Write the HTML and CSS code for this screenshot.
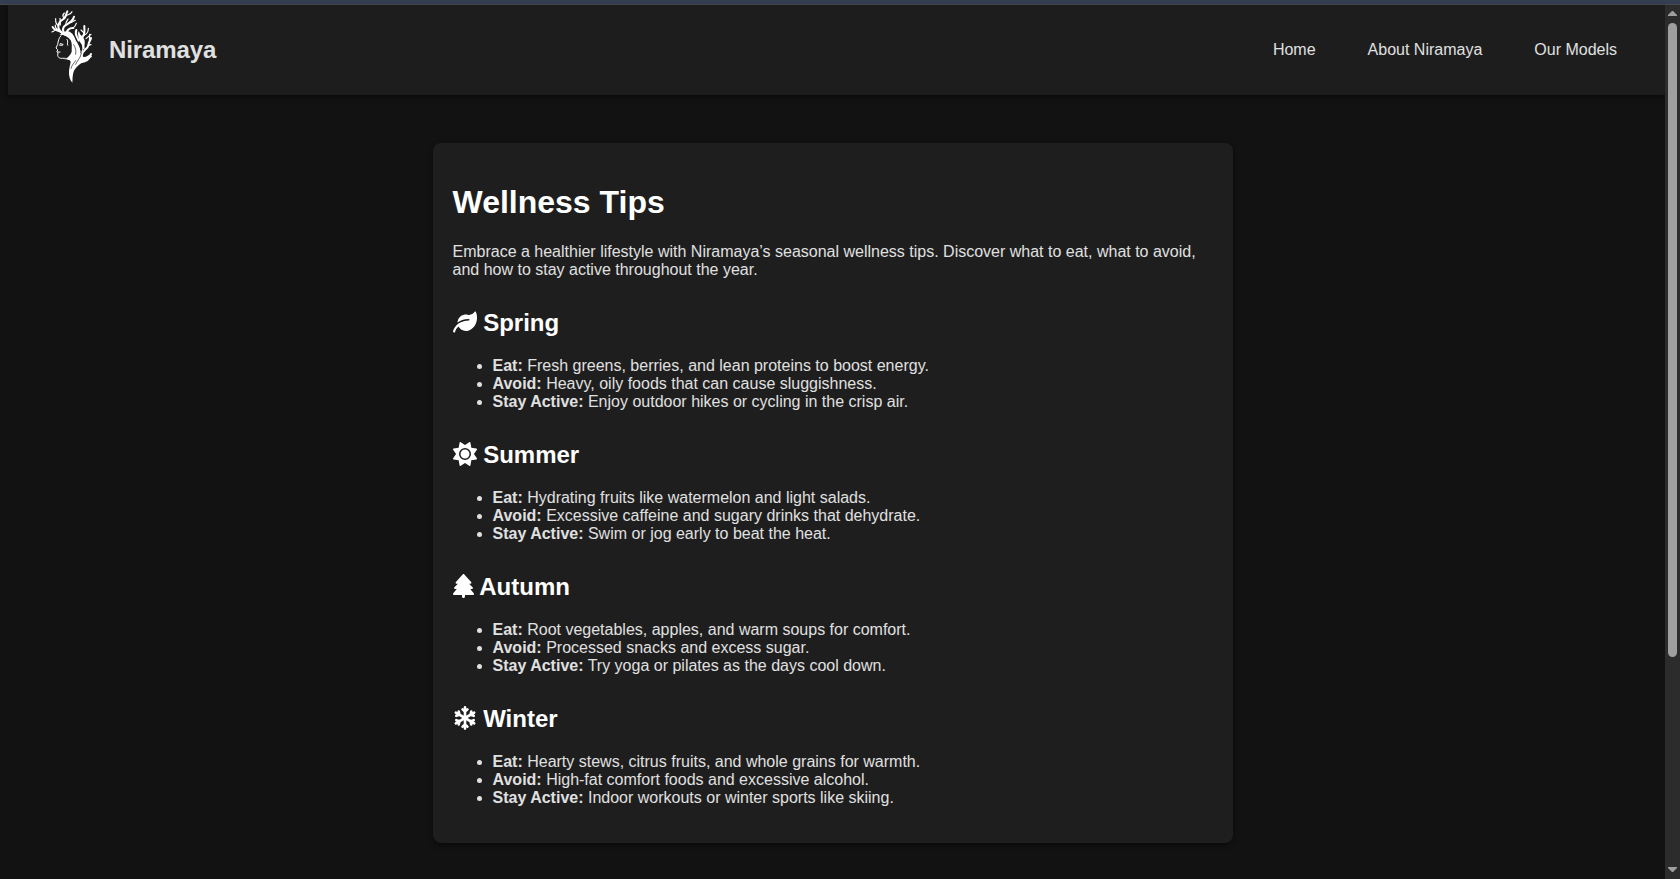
FILE: index.html
```html
<!DOCTYPE html>
<html lang="en">
<head>
<meta charset="utf-8">
<title>Niramaya - Wellness Tips</title>
<link rel="stylesheet" href="styles.css">
</head>
<body>
<div class="frame-edge"></div>
<div class="viewport">
  <div class="page">
    <header class="navbar">
      <div class="brand">
        <svg class="logo" viewBox="0 0 165 252" width="55" height="84" fill="none" stroke="#fff" stroke-linecap="round" stroke-linejoin="round">
          <path fill="#fff" stroke="none" d="M44 92C56 80 70 80 78 86C88 92 90 106 96 115C101 124 108 137 106 148C113 139 116 126 107 117C99 108 101 95 98 85C110 96 122 102 119 121C117 136 108 145 115 159C122 161 132 153 139 147C135 164 120 171 109 178C96 186 86 198 84 211C82 221 83 229 82 236C75 229 71 216 72 202C73 189 76 181 77 173C75 167 64 166 58 166C70 161 77 152 80 143C80 131 82 119 77 109C70 98 58 92 44 92Z"/>
          <g stroke-width="6">
            <path d="M60 91C49 85 40 80 40 69C40 58 43 52 54 46C63 42 62 32 67 22"/>
            <path d="M58 90C53 80 52 70 61 64C75 56 85 50 87 38"/>
            <path d="M48 84C39 78 27 80 23 69"/>
            <path d="M66 90C62 80 75 70 85 72"/>
            <path d="M101 110C95 94 88 91 94 78"/>
            <path d="M116 133C114 116 107 108 113 98C121 89 118 80 118 66"/>
            <path d="M111 153C113 136 128 136 130 124C131 112 137 111 138 102"/>
            <path d="M105 174C122 174 134 166 138 150"/>
            <path d="M103 142C101 127 89 120 86 105"/>
            <path d="M97 160C98 148 92 142 90 134"/>
          </g>
          <g stroke-width="3.500">
            <path d="M58 43C51 36 53 32 58 27M63 35C69 31 77 32 81 23M40 65C30 58 32 50 32 44M40 77C29 73 31 68 31 63M46 63L45 43M62 63C62 54 66 50 69 45M77 56L91 49M28 80L21 84M82 71C91 73 91 62 94 58"/>
            <path d="M117 94C129 88 130 82 130 73M108 107C102 96 104 91 101 84M123 104L138 91M129 124L138 122M133 114L134 91M116 86L108 78M129 160L139 158"/>
          </g>
          <g stroke-width="3">
            <path d="M48 95C40 103 40 112 38 121L33 132L38 137L36 143L39 147L38 154C41 166 49 162 61 163"/>
            <path d="M43 123L52 124M46 119L54 121M38 144L45 144M66 106C72 112 64 120 68 124"/>
          </g>
          <path stroke="#1d1d1d" stroke-width="2" d="M86 122C92 132 94 138 92 151M92 181C99 165 107 163 109 145M78 193C81 181 88 177 92 170"/>
        </svg>
        <span class="brand-name">Niramaya</span>
      </div>
      <nav class="nav-links">
        <a>Home</a>
        <a>About Niramaya</a>
        <a>Our Models</a>
      </nav>
    </header>
    <main class="card">
      <h1>Wellness Tips</h1>
      <p>Embrace a healthier lifestyle with Niramaya’s seasonal wellness tips. Discover what to eat, what to avoid, and how to stay active throughout the year.</p>

      <h2><svg class="icon" viewBox="0 0 512 512"><path d="M512 165.400c0 127.900-70.050 235.300-175.300 270.100c-20.040 7.938-41.830 12.460-64.690 12.460c-64.900 0-125.200-36.510-155.700-94.470c-54.130 49.930-68.710 107-68.960 108.100C44.720 472.600 34.870 480 24.020 480c-1.844 0-3.727-.2187-5.602-.6562c-12.890-3.098-20.840-16.080-17.750-28.960c9.598-39.500 90.470-226.400 335.300-226.400C344.800 224 352 216.800 352 208S344.800 192 336 192C228.600 192 151 226.600 96.290 267.600c.1934-10.820 1.242-21.840 3.535-33.050c13.470-65.810 66.040-119 131.400-134.200c28.330-6.562 55.680-6.013 80.930-.0054c56 13.320 118.200-7.412 149.300-61.240c5.664-9.828 20.020-9.516 24.660 .8282C502.700 76.760 512 121.900 512 165.400z"/></svg> Spring</h2>
      <ul>
        <li><strong>Eat:</strong> Fresh greens, berries, and lean proteins to boost energy.</li>
        <li><strong>Avoid:</strong> Heavy, oily foods that can cause sluggishness.</li>
        <li><strong>Stay Active:</strong> Enjoy outdoor hikes or cycling in the crisp air.</li>
      </ul>

      <h2><svg class="icon" viewBox="0 0 512 512"><path d="M361.5 1.2c5 2.1 8.600 6.600 9.600 11.900L391 121l107.900 19.800c5.300 1 9.800 4.600 11.900 9.600s1.500 10.700-1.600 15.200L446.900 256l62.300 90.300c3.100 4.500 3.700 10.200 1.600 15.200s-6.600 8.600-11.900 9.600L391 391 371.100 498.900c-1 5.300-4.600 9.800-9.600 11.900s-10.700 1.500-15.200-1.600L256 446.900l-90.300 62.300c-4.500 3.100-10.200 3.700-15.200 1.600s-8.600-6.600-9.600-11.900L121 391 13.100 371.100c-5.300-1-9.800-4.600-11.900-9.600s-1.500-10.700 1.600-15.200L65.100 256 2.800 165.700c-3.100-4.500-3.700-10.200-1.600-15.200s6.600-8.600 11.900-9.600L121 121 140.900 13.100c1-5.300 4.600-9.800 9.600-11.900s10.700-1.500 15.200 1.600L256 65.100 346.300 2.800c4.500-3.100 10.200-3.700 15.200-1.600zM160 256a96 96 0 1 1 192 0 96 96 0 1 1 -192 0zm224 0a128 128 0 1 0 -256 0 128 128 0 1 0 256 0z"/></svg> Summer</h2>
      <ul>
        <li><strong>Eat:</strong> Hydrating fruits like watermelon and light salads.</li>
        <li><strong>Avoid:</strong> Excessive caffeine and sugary drinks that dehydrate.</li>
        <li><strong>Stay Active:</strong> Swim or jog early to beat the heat.</li>
      </ul>

      <h2><svg class="icon icon-narrow" viewBox="0 0 448 512"><path d="M210.600 5.900L62 169.400c-3.900 4.200-6 9.800-6 15.500C56 197.700 66.300 208 79.100 208H104L30.600 281.400c-4.200 4.200-6.600 10-6.600 16C24 309.900 34.100 320 46.600 320H80L5.400 409.500C1.900 413.700 0 419 0 424.500c0 13 10.500 23.500 23.500 23.500H192v32c0 17.700 14.300 32 32 32s32-14.300 32-32V448H424.500c13 0 23.500-10.500 23.500-23.500c0-5.500-1.900-10.800-5.400-15L368 320h33.400c12.500 0 22.600-10.100 22.600-22.600c0-6-2.400-11.800-6.600-16L344 208h24.900c12.700 0 23.100-10.300 23.100-23.100c0-5.700-2.100-11.300-6-15.500L237.400 5.900C234 2.100 229.100 0 224 0s-10 2.100-13.400 5.900z"/></svg> Autumn</h2>
      <ul>
        <li><strong>Eat:</strong> Root vegetables, apples, and warm soups for comfort.</li>
        <li><strong>Avoid:</strong> Processed snacks and excess sugar.</li>
        <li><strong>Stay Active:</strong> Try yoga or pilates as the days cool down.</li>
      </ul>

      <h2><svg class="icon icon-line" viewBox="0 0 512 512"><g id="arm"><path d="M256 256V30M204 72L256 120L308 72"/></g><use href="#arm" transform="rotate(60 256 256)"/><use href="#arm" transform="rotate(120 256 256)"/><use href="#arm" transform="rotate(180 256 256)"/><use href="#arm" transform="rotate(240 256 256)"/><use href="#arm" transform="rotate(300 256 256)"/></svg> Winter</h2>
      <ul>
        <li><strong>Eat:</strong> Hearty stews, citrus fruits, and whole grains for warmth.</li>
        <li><strong>Avoid:</strong> High-fat comfort foods and excessive alcohol.</li>
        <li><strong>Stay Active:</strong> Indoor workouts or winter sports like skiing.</li>
      </ul>
    </main>
  </div>
  <div class="scrollbar">
    <svg width="9" height="5" viewBox="0 0 9 5"><path d="M0 5V4L4 0H5L9 4V5Z"/></svg>
    <div class="thumb"></div>
    <svg class="down" width="9" height="5" viewBox="0 0 9 5"><path d="M0 0V1L4 5H5L9 1V0Z"/></svg>
  </div>
</div>
</body>
</html>
```
FILE: styles.css
```css
* {
  box-sizing: border-box;
}

body {
  margin: 0;
  height: 879px;
  overflow: hidden;
  background: #121212;
  color: #e0e0e0;
  font-family: "Liberation Sans", Arial, sans-serif;
  font-size: 16px;
}

.frame-edge {
  height: 5px;
  background: #353e53;
  border-bottom: 1px solid #46494f;
}

.viewport {
  display: flex;
  height: 874px;
}

.page {
  flex: 1;
}

.navbar {
  display: flex;
  justify-content: space-between;
  height: 90px;
  margin-left: 8px;
  padding: 0 48px 0 37px;
  background: #1d1d1d;
  box-shadow: 0 2px 5px rgba(0, 0, 0, 0.5);
}

.brand {
  display: flex;
  gap: 9px;
}

.logo {
  margin-top: -1px;
}

.brand-name {
  font-size: 24px;
  font-weight: bold;
  letter-spacing: -0.1px;
  line-height: 90px;
}

.nav-links {
  display: flex;
  gap: 52px;
  line-height: 89px;
}

.card {
  width: 800px;
  height: 700px;
  margin: 48px auto 0;
  padding: 20px;
  background: #1e1e1e;
  border-radius: 8px;
  box-shadow: 0 2px 5px rgba(0, 0, 0, 0.5);
}

h1 {
  margin: 21px 0 22px;
  font-size: 32px;
  line-height: 37px;
  color: #fff;
}

p {
  margin: 0;
  line-height: 18px;
}

h2 {
  margin: 30px 0 20px;
  font-size: 24px;
  line-height: 28px;
  color: #fff;
}

ul {
  margin: 0;
  padding-left: 40px;
  line-height: 18px;
}

.icon {
  width: 24px;
  height: 24px;
  fill: #fff;
  vertical-align: -3px;
}

.icon-narrow {
  width: 21px;
}

.icon-line {
  fill: none;
  stroke: #fff;
  stroke-width: 56;
  stroke-linecap: round;
  stroke-linejoin: round;
}

.scrollbar {
  display: flex;
  flex-direction: column;
  align-items: center;
  width: 15px;
  padding: 6px 0 7px;
  background: #2c2c2c;
}

.scrollbar svg {
  fill: #9f9f9f;
}

.thumb {
  width: 9px;
  height: 634px;
  margin-top: 7px;
  border-radius: 5px;
  background: #9f9f9f;
}

.down {
  margin-top: auto;
}
```
